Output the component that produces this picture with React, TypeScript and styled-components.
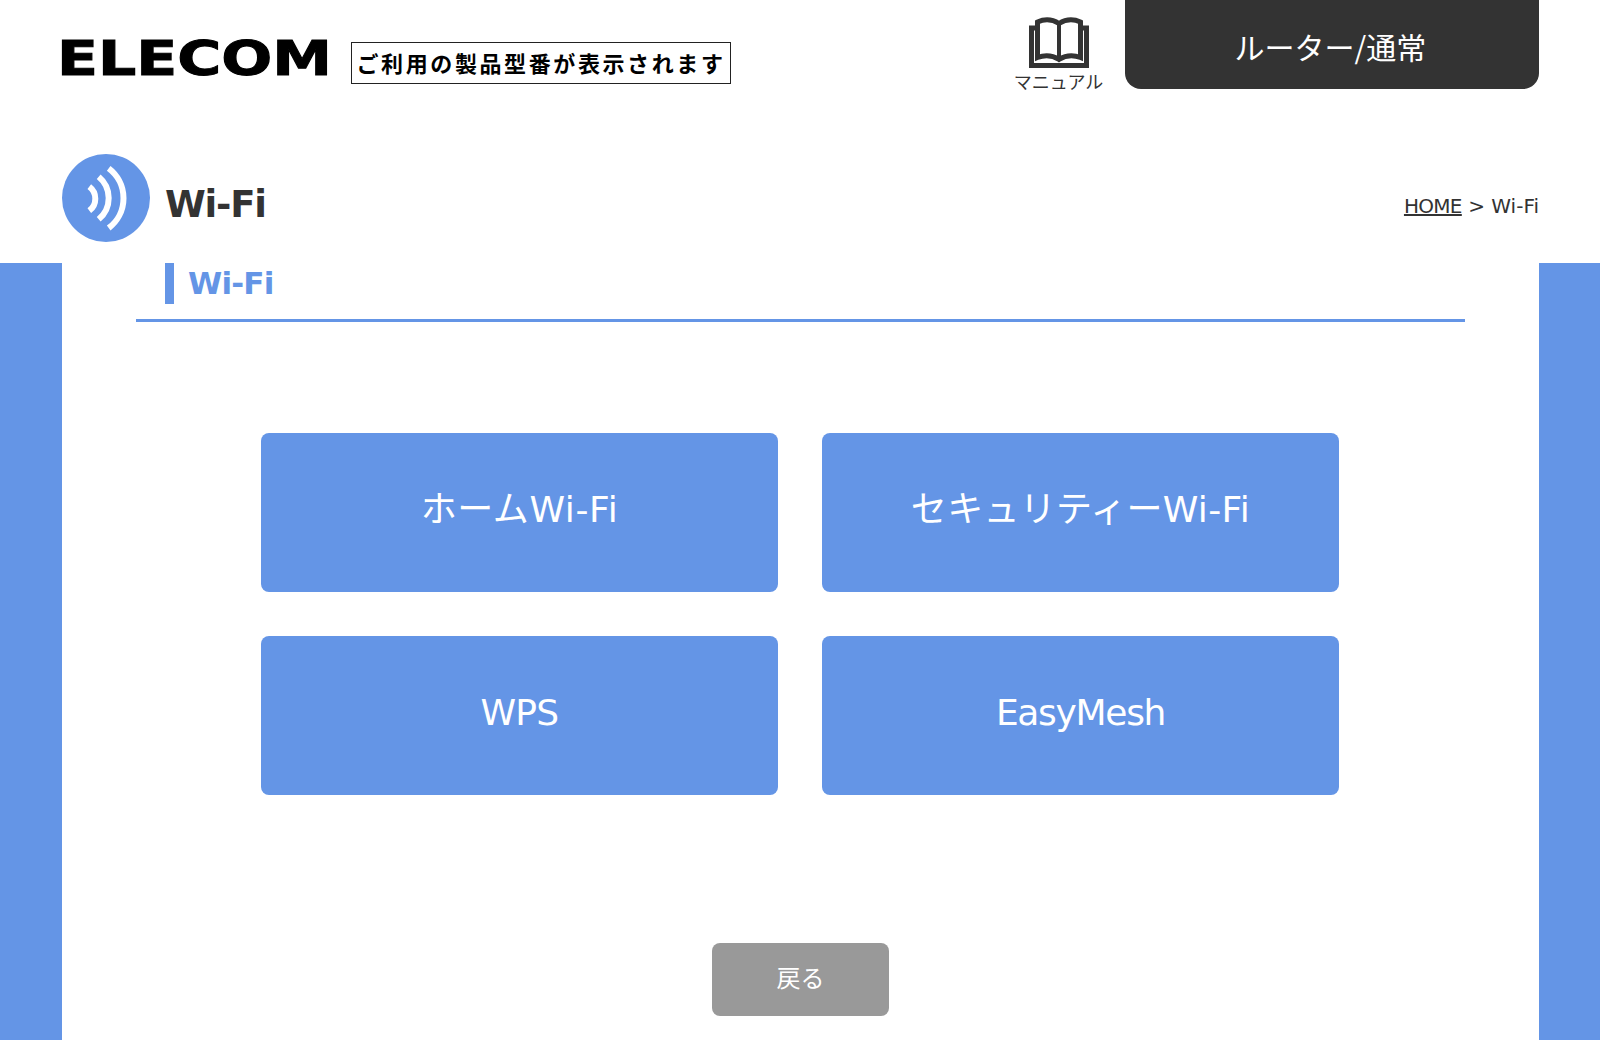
import React from 'react';
import styled, { createGlobalStyle } from 'styled-components';

const BLUE = '#6495e6';
const DARK = '#333333';
const FONT = '"DejaVu Sans", "Noto Sans CJK JP", sans-serif';

const GlobalStyle = createGlobalStyle`
  html, body {
    margin: 0;
    padding: 0;
    background: #fff;
    overflow: hidden;
  }
  body {
    font-family: ${FONT};
    color: ${DARK};
  }
`;

const Header = styled.header`
  display: flex;
  justify-content: space-between;
  align-items: flex-start;
  height: 154px;
  padding: 0 61px;
  box-sizing: border-box;
`;

const Brand = styled.div`
  display: flex;
  align-items: flex-start;
  gap: 21px;
  padding-top: 36px;
`;

const LogoBox = styled.svg`
  display: block;
  width: 269px;
  height: 42px;
  overflow: visible;
`;

const ModelBox = styled.div`
  width: 380px;
  height: 42px;
  margin-top: 6px;
  padding-bottom: 3px;
  border: 1px solid #222;
  box-sizing: border-box;
  display: flex;
  align-items: center;
  justify-content: center;
  font-family: "Noto Sans CJK JP", sans-serif;
  font-size: 22px;
  font-weight: 700;
  letter-spacing: 2.6px;
  color: #000;
  white-space: nowrap;
`;

const HeaderRight = styled.div`
  display: flex;
  align-items: flex-start;
  gap: 22px;
`;

const ManualLink = styled.a`
  display: flex;
  flex-direction: column;
  align-items: center;
  width: 89px;
  padding-top: 17px;
  font-size: 18px;
  line-height: 26px;
  font-family: "Noto Sans CJK JP", sans-serif;
  font-weight: 400;
  color: ${DARK};
  white-space: nowrap;
`;

const ModeTab = styled.div`
  width: 414px;
  height: 89px;
  padding: 2px 3px 0 0;
  box-sizing: border-box;
  background: ${DARK};
  border-radius: 0 0 16px 16px;
  color: #fff;
  font-size: 30px;
  font-family: "Noto Sans CJK JP", sans-serif;
  font-weight: 400;
  display: flex;
  align-items: center;
  justify-content: center;
`;

const TitleRow = styled.div`
  display: flex;
  align-items: flex-start;
  height: 109px;
  padding: 0 61px 0 62px;
`;

const TitleIcon = styled.svg`
  display: block;
  width: 88px;
  height: 88px;
  flex: none;
`;

const PageTitle = styled.h1`
  margin: 0 0 0 15px;
  font-size: 37px;
  line-height: 102px;
  letter-spacing: -1.2px;
  font-weight: 700;
  color: ${DARK};
`;

const Breadcrumb = styled.nav`
  margin-left: auto;
  padding-top: 37px;
  font-size: 20px;
  line-height: 30px;
  color: ${DARK};

  a {
    color: inherit;
    text-decoration: underline;
    letter-spacing: -0.7px;
  }
`;

const Stage = styled.main`
  background: ${BLUE};
  padding: 0 61px 0 62px;
  height: 777px;
  box-sizing: border-box;
`;

const Panel = styled.div`
  background: #fff;
  height: 100%;
  overflow: hidden;
`;

const SectionHeading = styled.h2`
  margin: 0 0 0 103px;
  height: 41px;
  padding-left: 14px;
  border-left: 9px solid ${BLUE};
  font-size: 31px;
  line-height: 41px;
  letter-spacing: -0.8px;
  font-weight: 700;
  color: ${BLUE};
`;

const Rule = styled.hr`
  margin: 15px 74px 0;
  height: 3px;
  border: 0;
  background: ${BLUE};
`;

const ButtonGrid = styled.div`
  display: grid;
  grid-template-columns: repeat(2, 517px);
  grid-auto-rows: 159px;
  gap: 44px;
  margin: 111px 0 0 199px;
`;

const MenuButton = styled.button<{ $tracking: number }>`
  border: 0;
  border-radius: 8px;
  background: ${BLUE};
  color: #fff;
  font-family: ${FONT};
  font-size: 36px;
  line-height: 44px;
  font-weight: 400;
  letter-spacing: ${(p) => p.$tracking}px;
  padding: 0 0 6px;
`;

const BackRow = styled.div`
  display: flex;
  justify-content: center;
  margin-top: 148px;
`;

const BackButton = styled.button`
  width: 177px;
  height: 73px;
  padding: 0 0 6px;
  border: 0;
  border-radius: 8px;
  background: #999999;
  color: #fff;
  font-family: "Noto Sans CJK JP", sans-serif;
  font-size: 24px;
  font-weight: 400;
`;

const MENU_ITEMS = [
  { label: 'ホームWi-Fi', tracking: 0.6 },
  { label: 'セキュリティーWi-Fi', tracking: 0.3 },
  { label: 'WPS', tracking: -0.7 },
  { label: 'EasyMesh', tracking: -1.3 },
];

const BookIcon = () => (
  <svg width="60" height="51" viewBox="0 0 60 51" fill="none" stroke={DARK}>
    <path d="M6 11H2.5V48.5H57.5V11H54" strokeWidth="5" />
    <path
      d="M8.5 5C15 2 23 2 30 6.5C37 2 45 2 51.5 5V40.5C45 38 37 38 30 42.5C23 38 15 38 8.5 40.5Z"
      strokeWidth="5"
    />
    <path d="M30 6V42" strokeWidth="4" />
  </svg>
);

export default function App() {
  return (
    <>
      <GlobalStyle />
      <Header>
        <Brand>
          <LogoBox viewBox="0 0 269 42">
            <text
              x="-4"
              y="39"
              textLength="275"
              lengthAdjust="spacingAndGlyphs"
              fontFamily='"DejaVu Sans", sans-serif'
              fontWeight="700"
              fontSize="48"
              fill="#000"
              stroke="#000"
              strokeWidth="1"
            >
              ELECOM
            </text>
          </LogoBox>
          <ModelBox>ご利用の製品型番が表示されます</ModelBox>
        </Brand>
        <HeaderRight>
          <ManualLink>
            <BookIcon />
            マニュアル
          </ManualLink>
          <ModeTab>ルーター/通常</ModeTab>
        </HeaderRight>
      </Header>

      <TitleRow>
        <TitleIcon viewBox="0 0 88 88">
          <circle cx="44" cy="44" r="44" fill={BLUE} />
          <g fill="none" stroke="#fff" strokeWidth="6">
            <path d="M46.7 14.3A37.5 37.5 0 0 1 46.7 74" />
            <path d="M36.7 22.7A27.7 27.7 0 0 1 36.7 65.3" />
            <path d="M27.3 32.7A15 15 0 0 1 27.3 56.7" />
          </g>
        </TitleIcon>
        <PageTitle>Wi-Fi</PageTitle>
        <Breadcrumb>
          <a>HOME</a> &gt; Wi-Fi
        </Breadcrumb>
      </TitleRow>

      <Stage>
        <Panel>
          <SectionHeading>Wi-Fi</SectionHeading>
          <Rule />
          <ButtonGrid>
            {MENU_ITEMS.map((item) => (
              <MenuButton key={item.label} $tracking={item.tracking}>
                {item.label}
              </MenuButton>
            ))}
          </ButtonGrid>
          <BackRow>
            <BackButton>戻る</BackButton>
          </BackRow>
        </Panel>
      </Stage>
    </>
  );
}
